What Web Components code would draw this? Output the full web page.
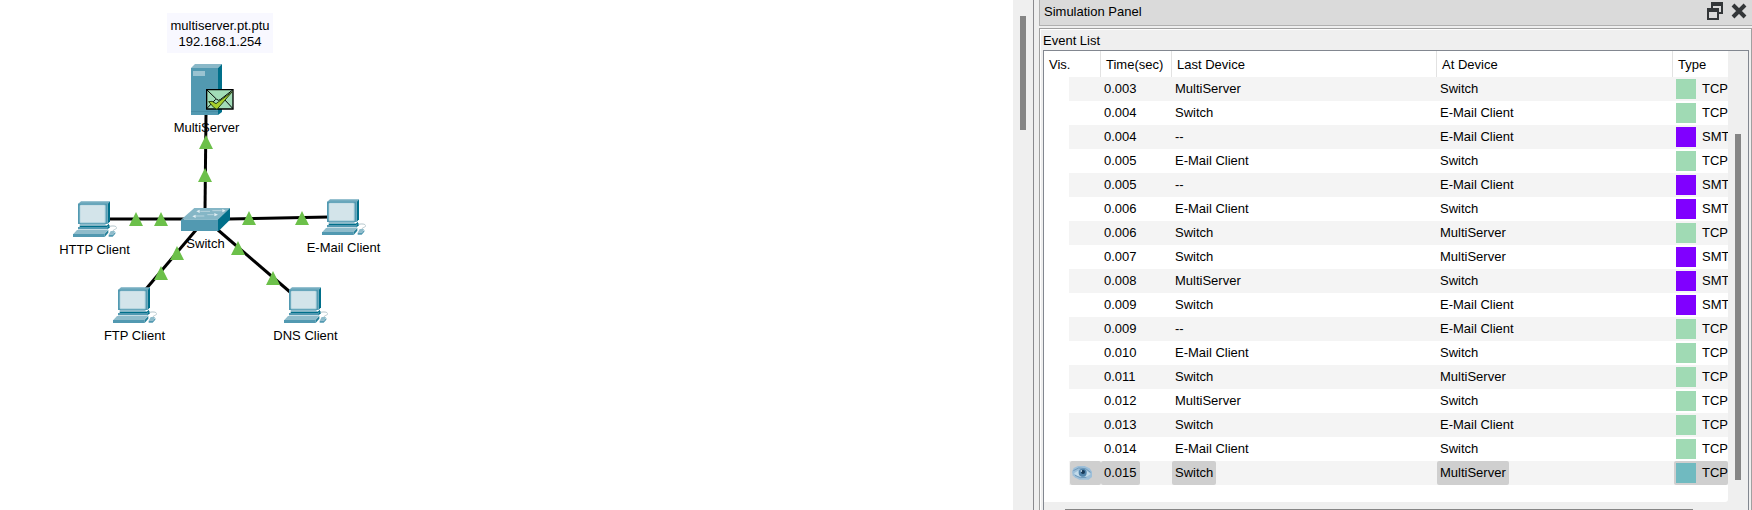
<!DOCTYPE html>
<html lang="en">
<head>
<meta charset="utf-8">
<title>Simulation</title>
<style>
  html, body { margin: 0; height: 100%; overflow: hidden; }
  body { background: #efefef; color: #000; font: 13px/16px "Liberation Sans", Arial, sans-serif; }
</style>
</head>
<body>
<sim-app></sim-app>

<template id="t-app">
  <style>
    :host { display: grid; grid-template-columns: minmax(0, 1fr) 20px 719px; height: 100vh; }
    main { background: #fff; overflow: hidden; }
    .track { padding: 16px 7px 0; }
  </style>
  <main><net-workspace></net-workspace></main>
  <div class="track"><scroll-thumb style="height:114px"></scroll-thumb></div>
  <sim-panel heading="Simulation Panel"><event-list></event-list></sim-panel>
</template>

<template id="t-thumb">
  <style>:host { display: block; background: #858585; box-sizing: border-box; }</style>
</template>

<template id="t-workspace">
  <style>
    :host { display: block; position: relative; height: 100%; }
    .links { position: absolute; left: 0; top: 0; }
    .links g { stroke: #000; stroke-width: 3; }
    .note { position: absolute; left: 167px; top: 13px; width: 106px; padding: 5px 0 3px; background: #f8f8ff; text-align: center; }
    net-node { position: absolute; }
    .lights { fill: #6cc04a; }
  </style>
  <svg class="links" width="420" height="340" aria-hidden="true">
    <g>
      <path d="M206 114L205 210"/><path d="M109 219L184 219"/><path d="M228 219L329 217"/>
      <path d="M196 230L146 289"/><path d="M218 230L290 292"/>
    </g>
  </svg>
  <div class="note">multiserver.pt.ptu<br>192.168.1.254</div>
  <net-node style="left:161px;top:64px" kind="server" mail>MultiServer</net-node>
  <net-node style="left:160px;top:208px" kind="switch">Switch</net-node>
  <net-node style="left:49px;top:201px" kind="pc">HTTP Client</net-node>
  <net-node style="left:298px;top:199px" kind="pc">E-Mail Client</net-node>
  <net-node style="left:89px;top:287px" kind="pc">FTP Client</net-node>
  <net-node style="left:260px;top:287px" kind="pc">DNS Client</net-node>
  <svg class="links lights" width="420" height="340" aria-hidden="true">
    <path d="M206 135l7 14h-14zM205 168l7 14h-14zM136 212l7 14h-14zM161 212l7 14h-14zM249 211l7 14h-14zM302 211l7 14h-14zM177 246l7 14h-14zM161 266l7 14h-14zM238 241l7 14h-14zM273 271l7 14h-14z"/>
  </svg>
</template>

<template id="t-node">
  <style>
    :host { display: flex; flex-direction: column; align-items: center; gap: 4px; width: 91px; }
    .icon { position: relative; display: flex; }
    .mail { position: absolute; left: 15px; top: 25px; overflow: visible; }
    span { white-space: nowrap; }
  </style>
  <div class="icon"></div>
  <span><slot></slot></span>
</template>

<template id="t-panel">
  <style>
    :host { display: grid; grid-template-rows: 26px 1fr; row-gap: 2px; border-left: 1px solid #8a8a8e; padding-left: 5px; min-width: 0; }
    header { display: flex; align-items: center; gap: 8px; box-sizing: border-box; padding: 0 5px 0 4px; background: #dadada; border: solid #b0b0b0; border-width: 0 0 1px 1px; }
    h1 { flex: 1; margin: 0; font: inherit; padding-bottom: 2px; }
    button { border: 0; padding: 0; margin: 0 0 4px; background: none; display: flex; }
    section { border: solid #a0a0a0; border-width: 1px 1px 0 1px; box-shadow: inset 1px 1px #fff; padding: 0 2px 0 3px; }
    h2 { margin: 0; font: inherit; padding: 4px 0 1px; }
  </style>
  <header>
    <h1></h1>
    <button aria-label="Float panel"><svg width="16" height="18" viewBox="0 0 16 18"><path fill="#333638" fill-rule="evenodd" d="M4 0h12v12h-4v-2h2V4H6v2H4zM0 6h12v12H0zM2 10v6h8v-6z"/></svg></button>
    <button aria-label="Close panel"><svg width="16" height="16" viewBox="0 0 16 16"><path d="M2 2L14 14M14 2L2 14" stroke="#333638" stroke-width="4"/></svg></button>
  </header>
  <section><h2>Event List</h2><slot></slot></section>
</template>

<template id="t-events">
  <style>
    :host { display: grid; grid-template-columns: minmax(0, 1fr) 20px; grid-template-rows: auto 20px; border: 1px solid #828790; border-bottom: 0; }
    .view { background: #fff; padding-bottom: 17px; border-radius: 0 0 3px 0; overflow: hidden; }
    table { width: 100%; table-layout: fixed; border-collapse: separate; border-spacing: 0; }
    .vis { width: 57px; } .time { width: 71px; } .last { width: 265px; } .at { width: 236px; }
    th { box-sizing: border-box; height: 26px; padding: 2px 0 0 5px; border-right: 1px solid #e2e2e2; font-weight: normal; text-align: left; white-space: nowrap; }
    th:last-child { border: 0; }
    td { height: 24px; padding: 0; overflow: hidden; white-space: nowrap; }
    td:first-child { padding-left: 25px; background-clip: content-box; }
    tbody tr:nth-child(odd) td { background-color: #f4f4f4; }
    td span { display: flex; align-items: center; width: max-content; height: 24px; padding: 0 3px; border-radius: 2px; }
    .type span { gap: 6px; width: auto; margin-left: 1px; padding: 0 0 0 2px; }
    i { flex: none; width: 20px; height: 20px; background: #a0dab4; }
    .smtp i { background: #8000ff; }
    .selected span { background: #cfcfcf; }
    .selected i { background: #70bac0; }
    .selected td:first-child span { width: auto; margin-left: 1px; padding: 0 2px; }
    .v { padding: 83px 7px 0; }
    .h { padding: 7px 35px 0 21px; }
  </style>
  <div class="view"><table>
    <thead><tr><th class="vis">Vis.</th><th class="time">Time(sec)</th><th class="last">Last Device</th><th class="at">At Device</th><th>Type</th></tr></thead>
    <tbody></tbody>
  </table></div>
  <div class="v"><scroll-thumb style="height:346px"></scroll-thumb></div>
  <div class="h"><scroll-thumb style="height:6px"></scroll-thumb></div>
</template>

<script>
const ICONS = {
  pc: `<svg width="44" height="37" viewBox="0 0 132 111">
    <path fill="#74adc0" d="M15 9L24 1H111L104 9z"/><path fill="#006f8a" d="M104 9L111 1V61L104 69z"/>
    <path fill="#5299b1" d="M15 8H104V69H15z"/><rect x="20" y="11" width="78" height="56" rx="4" fill="#a9cfda"/><rect x="22" y="13" width="73" height="51" rx="3" fill="#d3e4ea"/>
    <path fill="#8fbccb" d="M20 69H96L102 74H20z"/><path fill="#006f8a" d="M20 74H101L108 68V74L101 79H20z"/>
    <path fill="#5299b1" d="M15 78H103V85H15z"/><path fill="#006f8a" d="M103 78L110 72V79L103 86z"/>
    <path fill="#8fbccb" d="M12 87H104L95 99H1z"/><path fill="#5299b1" d="M0 99H95V108H0z"/><path fill="#237f98" d="M95 99L106 86V95L95 108z"/>
    <path fill="none" stroke="#b4c6cc" stroke-width="3" d="M110 76C122 73 134 76 130 82C128 87 120 84 120 91"/>
    <path fill="#8fbccb" d="M113 90H126L121 101H107z"/><path fill="#5299b1" d="M107 101H120L127 92V98L119 107H107z"/></svg>`,
  server: `<svg width="31" height="52" viewBox="0 0 31 52">
    <path fill="#8ab8c8" d="M0 4L4 0H31L27 4z"/><path fill="#006f8a" d="M27 4L31 0V48L27 51z"/>
    <path fill="#5299b1" d="M0 4H27V51H0z"/><path fill="#9ac3d1" d="M2 7H14V12H2z"/><path stroke="#468ca4" d="M0 47.5H27"/></svg>`,
  switch: `<svg width="49" height="24" viewBox="0 0 147 72">
    <path fill="#85b6c6" d="M0 35L40 0H147L110 35z"/><path fill="#006f8a" d="M110 35L147 0V35L113 69H110z"/><path fill="#5299b1" d="M0 35H111V69H0z"/>
    <g stroke="#d3e4ea" stroke-width="2" fill="#e4f0f4"><path d="M58 10H87M94 8H122M45 24H70M79 20H98"/><path stroke="none" d="M46 10L56 5V15zM134 8L124 3V13zM34 25L44 20V30zM111 20L100 15V25z"/></g></svg>`,
  mail: `<svg class="mail" width="28" height="21" viewBox="0 0 84 63">
    <path fill="#a2dcb8" stroke="#000" stroke-width="4" d="M2 2H81V60H2z"/><path fill="none" stroke="#000" stroke-width="3" d="M3 3L32 31L38 34L44 31L80 3M3 58L29 31M80 58L54 30"/>
    <path fill="#a6ce2c" stroke="#294313" stroke-width="3" d="M8 38L18 37L30 44L79 8L33 61L24 56z"/></svg>`,
  eye: `<svg width="20" height="14" viewBox="0 0 60 42" role="img" aria-label="Visible">
    <path fill="#9dbfd9" d="M0 17L5 6L18 0H38L53 7L60 17V33L50 41H22L8 34L2 28z"/><path fill="#c3dbea" d="M6 22L18 14L28 33L16 31zM45 15L56 24L46 31L38 33z"/>
    <path fill="none" stroke="#6f9abb" stroke-width="3" d="M4 14L20 6L41 8L56 19M9 28L25 35L43 34"/>
    <circle cx="32" cy="20" r="12" fill="#5285ac"/><circle cx="33" cy="18" r="6" fill="#183a59"/><path fill="#d5e8f4" d="M26 13h4v4h-4z"/></svg>`
};

const EVENTS = [
  ["0.003", "MultiServer", "Switch", "TCP"], ["0.004", "Switch", "E-Mail Client", "TCP"],
  ["0.004", "--", "E-Mail Client", "SMTP"], ["0.005", "E-Mail Client", "Switch", "TCP"],
  ["0.005", "--", "E-Mail Client", "SMTP"], ["0.006", "E-Mail Client", "Switch", "SMTP"],
  ["0.006", "Switch", "MultiServer", "TCP"], ["0.007", "Switch", "MultiServer", "SMTP"],
  ["0.008", "MultiServer", "Switch", "SMTP"], ["0.009", "Switch", "E-Mail Client", "SMTP"],
  ["0.009", "--", "E-Mail Client", "TCP"], ["0.010", "E-Mail Client", "Switch", "TCP"],
  ["0.011", "Switch", "MultiServer", "TCP"], ["0.012", "MultiServer", "Switch", "TCP"],
  ["0.013", "Switch", "E-Mail Client", "TCP"], ["0.014", "E-Mail Client", "Switch", "TCP"],
  ["0.015", "Switch", "MultiServer", "TCP"]
];

class Base extends HTMLElement {
  connectedCallback() {
    if (this.shadowRoot) return;
    const root = this.attachShadow({ mode: "open" });
    root.append(document.getElementById(this.constructor.template).content.cloneNode(true));
    this.fill(root);
  }
  fill() {}
}
customElements.define("scroll-thumb", class extends Base { static template = "t-thumb"; });
customElements.define("net-node", class extends Base {
  static template = "t-node";
  fill(root) {
    root.querySelector(".icon").innerHTML = ICONS[this.getAttribute("kind")] + (this.hasAttribute("mail") ? ICONS.mail : "");
  }
});
customElements.define("net-workspace", class extends Base { static template = "t-workspace"; });
customElements.define("event-list", class extends Base {
  static template = "t-events";
  fill(root) {
    root.querySelector("tbody").innerHTML = EVENTS.map(([time, last, at, type], n) => {
      const selected = n === EVENTS.length - 1;
      return `<tr class="${type.toLowerCase()}${selected ? " selected" : ""}"><td><span>${selected ? ICONS.eye : ""}</span></td><td><span>${time}</span></td><td><span>${last}</span></td><td><span>${at}</span></td><td class="type"><span><i></i>${type}</span></td></tr>`;
    }).join("");
  }
});
customElements.define("sim-panel", class extends Base {
  static template = "t-panel";
  fill(root) { root.querySelector("h1").textContent = this.getAttribute("heading"); }
});
customElements.define("sim-app", class extends Base { static template = "t-app"; });
</script>
</body>
</html>
